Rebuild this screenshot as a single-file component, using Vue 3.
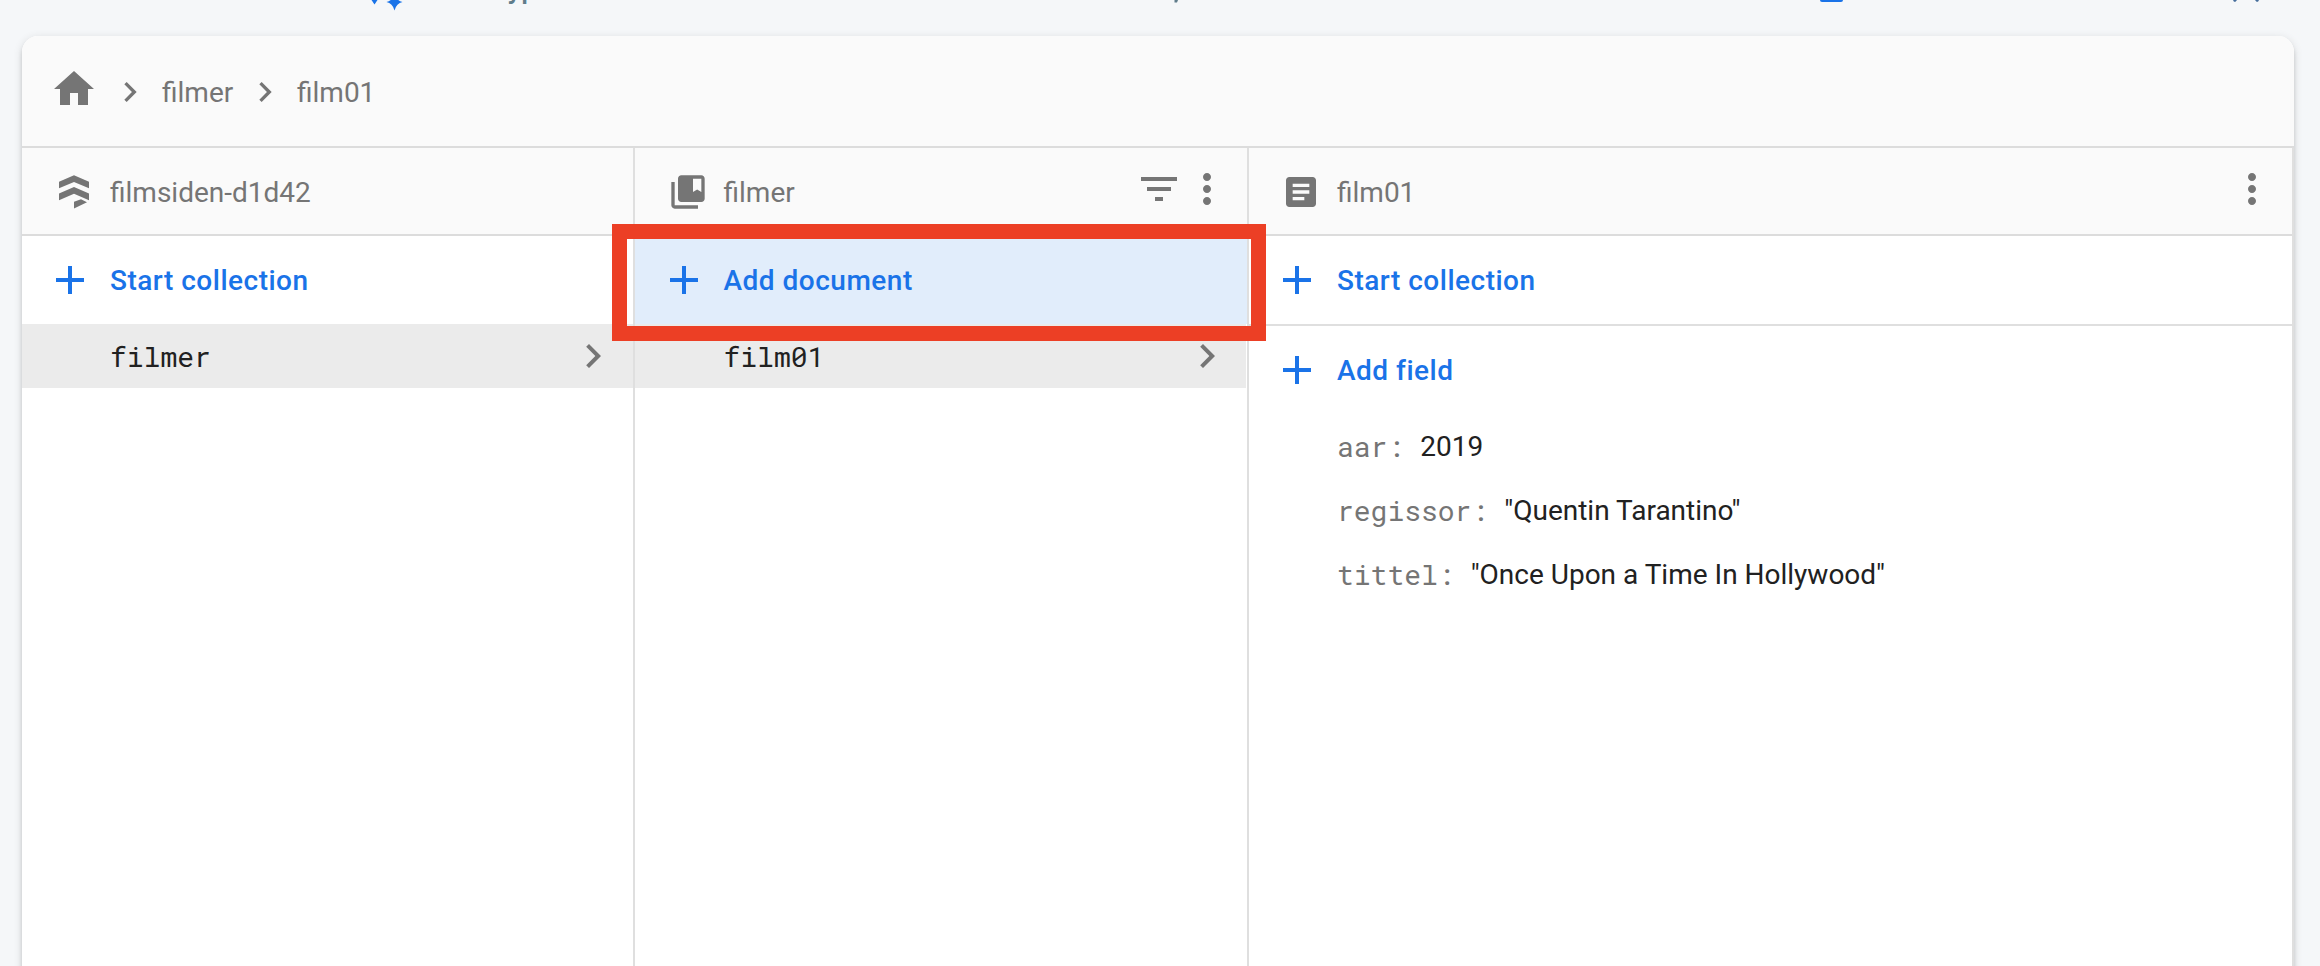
<script setup>
const icons = {
  home: 'M10 20v-6h4v6h5v-8h3L12 3 2 12h3v8z',
  chevron: 'M10 6L8.59 7.41 13.17 12l-4.58 4.59L10 18l6-6z',
  add: 'M19 13h-6v6h-2v-6H5v-2h6V5h2v6h6z',
  more: 'M12 8c1.1 0 2-.9 2-2s-.9-2-2-2-2 .9-2 2 .9 2 2 2zm0 2c-1.1 0-2 .9-2 2s.9 2 2 2 2-.9 2-2-.9-2-2-2zm0 6c-1.1 0-2 .9-2 2s.9 2 2 2 2-.9 2-2-.9-2-2-2z',
  filter: 'M10 18h4v-2h-4v2zM3 6v2h18V6H3zm3 7h12v-2H6v2z',
  collection: 'M4 6H2v14c0 1.1.9 2 2 2h14v-2H4V6zM20 2H8c-1.1 0-2 .9-2 2v12c0 1.1.9 2 2 2h12c1.1 0 2-.9 2-2V4c0-1.1-.9-2-2-2zm0 10l-2.5-1.5L15 12V4h5v8z',
  doc: 'M19 3H5c-1.1 0-2 .9-2 2v14c0 1.1.9 2 2 2h14c1.1 0 2-.9 2-2V5c0-1.1-.9-2-2-2zm-5 14H7v-2h7v2zm3-4H7v-2h10v2zm0-4H7V7h10v2z',
  database: 'M12 2l9 3.8v4L12 6 3 9.8v-4zM12 9l9 3.9v4l-9-3.8-9 3.8v-4zM12 17.8l4.2-1.5 3.6 1.8-7.8 3.8z',
}
const fields = [
  { name: 'aar:', value: '2019' },
  { name: 'regissor:', value: '"Quentin Tarantino"' },
  { name: 'tittel:', value: '"Once Upon a Time In Hollywood"' },
]
</script>

<template>
  <div class="page">
    <svg class="strip" width="2320" height="36" viewBox="0 0 2320 36">
      <path class="blue" d="M371.5 0h6l-3 4.5zM386.5 2q6-1 8-9 2 8 8 9-6 1-8 8.5-2-7.5-8-8.5z" />
      <text class="cut" x="507.5" y="-2">yp</text>
      <path class="slate" d="M1174.5 0h3.5l-1 2.5h-2.5z" />
      <path class="blue" d="M1820 0h23q0 2-2 2h-19q-2 0-2-2z" />
      <path class="navy" d="M2233 0h4l-1.500 1.800h-1.500zM2255 0h4l-1 1.800h-1.500z" />
    </svg>

    <main class="card">
      <nav class="crumbs">
        <svg class="i48 home" viewBox="0 0 24 24"><path :d="icons.home" /></svg>
        <svg class="i40 sep1" viewBox="0 0 24 24"><path :d="icons.chevron" /></svg>
        <span class="crumb">filmer</span>
        <svg class="i40" viewBox="0 0 24 24"><path :d="icons.chevron" /></svg>
        <span class="crumb">film01</span>
      </nav>

      <div class="columns">
        <section class="col">
          <header class="head">
            <svg class="i40" viewBox="0 0 24 24"><path :d="icons.database" /></svg>
            <span class="title">filmsiden-d1d42</span>
          </header>
          <div class="action">
            <svg class="i48" viewBox="0 0 24 24"><path :d="icons.add" /></svg>
            <span>Start collection</span>
          </div>
          <div class="item">
            <span>filmer</span>
            <svg class="i48" viewBox="0 0 24 24"><path :d="icons.chevron" /></svg>
          </div>
        </section>

        <section class="col second">
          <header class="head">
            <svg class="i40" viewBox="0 0 24 24"><path :d="icons.collection" /></svg>
            <span class="title">filmer</span>
            <svg class="i48 tool" viewBox="0 0 24 24"><path :d="icons.filter" /></svg>
            <svg class="i48 tool" viewBox="0 0 24 24"><path :d="icons.more" /></svg>
          </header>
          <div class="action hover">
            <svg class="i48" viewBox="0 0 24 24"><path :d="icons.add" /></svg>
            <span>Add document</span>
            <div class="highlight"></div>
          </div>
          <div class="item">
            <span>film01</span>
            <svg class="i48" viewBox="0 0 24 24"><path :d="icons.chevron" /></svg>
          </div>
        </section>

        <section class="col last">
          <header class="head">
            <svg class="i40" viewBox="0 0 24 24"><path :d="icons.doc" /></svg>
            <span class="title">film01</span>
            <svg class="i48 tool" viewBox="0 0 24 24"><path :d="icons.more" /></svg>
          </header>
          <div class="action">
            <svg class="i48" viewBox="0 0 24 24"><path :d="icons.add" /></svg>
            <span>Start collection</span>
          </div>
          <div class="action ruled">
            <svg class="i48" viewBox="0 0 24 24"><path :d="icons.add" /></svg>
            <span>Add field</span>
          </div>
          <div v-for="f in fields" :key="f.name" class="field">
            <span class="key">{{ f.name }}</span>
            <span class="val">{{ f.value }}</span>
          </div>
        </section>
      </div>
    </main>
  </div>
</template>

<style>
body { margin: 0; }
</style>

<style scoped>
.page {
  width: 2320px;
  height: 966px;
  overflow: hidden;
  background: #f5f7f9;
  font-family: Roboto, "Liberation Sans", sans-serif;
  font-size: 28px;
  color: #757575;
}
.page * { box-sizing: border-box; }
svg { display: block; flex: none; fill: #757575; }
span { white-space: pre; }
.strip { height: 36px; }
.strip .blue { fill: #1a73e8; }
.strip .cut, .strip .slate { fill: #607d8b; }
.strip .cut { font-weight: 500; }
.strip .navy { fill: #466e9c; }
.i48 { width: 48px; height: 48px; }
.i40 { width: 40px; height: 40px; }
.card {
  width: 2272px;
  height: 980px;
  margin-left: 22px;
  border-radius: 16px;
  background: #fff;
  box-shadow: 0 6px 2px -4px rgba(0, 0, 0, .2), 0 4px 4px rgba(0, 0, 0, .14), 0 2px 10px rgba(0, 0, 0, .12);
}
.crumbs {
  display: flex;
  align-items: center;
  height: 112px;
  padding-left: 28px;
  background: #fafafa;
  border-bottom: 2px solid #dcdcdc;
  border-radius: 16px 16px 0 0;
}
.home { margin-bottom: 4px; }
.sep1 { margin-left: 12px; }
.crumb { width: 83px; margin-left: 12px; padding-top: 3px; line-height: 34px; }
.crumbs svg.i40 { margin-top: 1px; }
.columns { display: flex; height: 868px; }
.col { width: 613px; border-right: 2px solid #dfdfdf; }
.second { width: 614px; }
.last { width: 1045px; }
.head {
  display: flex;
  align-items: center;
  height: 88px;
  padding: 2px 16px 0 32px;
  background: #fafafa;
  border-bottom: 2px solid #dcdcdc;
}
.title { flex: 1; margin-left: 16px; padding-top: 2px; line-height: 34px; }
.second .head { padding-left: 32.5px; }
.tool { margin-top: -6px; }
.action {
  position: relative;
  display: flex;
  align-items: center;
  height: 88px;
  padding-left: 24px;
  color: #1a73e8;
  font-weight: 500;
  letter-spacing: .5px;
}
.action svg { fill: #1a73e8; }
.action span { margin-left: 16px; padding-top: 2px; line-height: 34px; }
.hover { padding-left: 24.5px; background: #e1edfb; }
.highlight {
  position: absolute;
  z-index: 2;
  left: -23px;
  top: -12px;
  width: 654px;
  height: 117px;
  border: 15px solid #ec3f25;
}
.ruled { height: 90px; border-top: 2px solid #dfdfdf; }
.item {
  display: flex;
  align-items: center;
  justify-content: space-between;
  height: 64px;
  padding: 0 16px 0 88px;
  background: #ebebeb;
  color: #212121;
  font-family: "Roboto Mono", "DejaVu Sans Mono", monospace;
}
.second .item { margin-right: 1px; padding: 0 15.5px 0 88.5px; }
.field {
  display: flex;
  height: 64px;
  padding-left: 88px;
  line-height: 64px;
}
.key { padding-top: 1px; font-family: "Roboto Mono", "DejaVu Sans Mono", monospace; }
.val { margin-left: 16px; padding-top: 1px; color: #212121; }
</style>
